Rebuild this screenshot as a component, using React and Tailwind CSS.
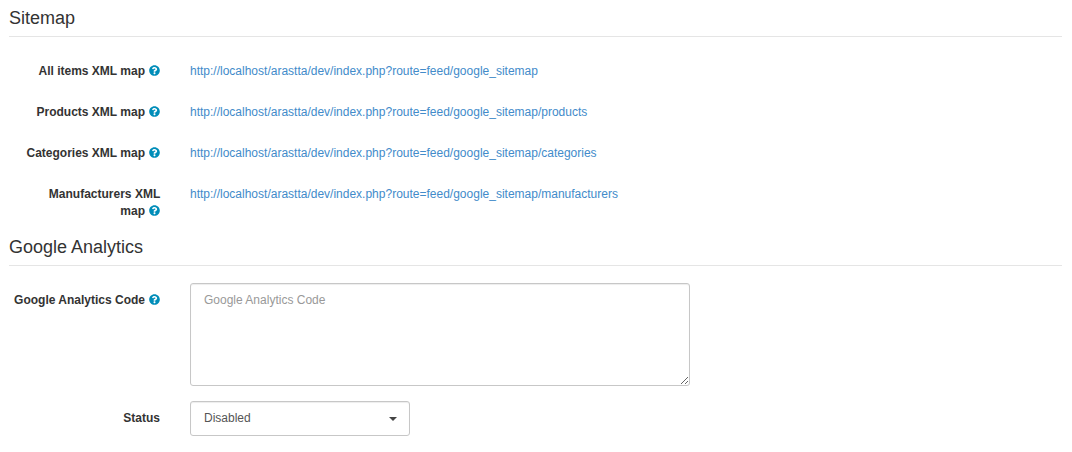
import React from "react";
import { FaQuestionCircle } from "react-icons/fa";

const base = "http://localhost/arastta/dev/index.php?route=feed/google_sitemap";
const maps = [
  { label: "All items XML", url: base },
  { label: "Products XML", url: base + "/products" },
  { label: "Categories XML", url: base + "/categories" },
  { label: "Manufacturers XML", url: base + "/manufacturers" },
];

function Help() {
  return <FaQuestionCircle aria-hidden="true" className="ml-1 inline-block size-[11px] align-[-1px] text-[#008db9]" />;
}

function Legend({ children }) {
  return <h2 className="border-b border-[#e5e5e5] pb-2 text-lg leading-5 text-[#333]">{children}</h2>;
}

export default function App() {
  return (
    <main className="bg-white pt-2 pr-[10px] pb-4 pl-[9px] font-['Liberation_Sans',Arial,sans-serif] text-xs leading-[17px] text-[#333]">
      <section>
        <Legend>Sitemap</Legend>
        <dl className="pt-[26px]">
          {maps.map((m) => (
            <div key={m.url} className="mb-6 flex gap-[30px] last:mb-0">
              <dt className="w-[151px] shrink-0 text-right font-bold">
                {m.label}{" "}
                <span className="whitespace-nowrap">
                  map
                  <Help />
                </span>
              </dt>
              <dd>
                <a href={m.url} className="text-[#428bca]">{m.url}</a>
              </dd>
            </div>
          ))}
        </dl>
      </section>
      <section className="pt-[17px]">
        <Legend>Google Analytics</Legend>
        <div className="flex gap-[30px] pt-[17px]">
          <label htmlFor="code" className="w-[151px] shrink-0 pt-[9px] text-right font-bold">
            Google Analytics Code
            <Help />
          </label>
          <textarea
            id="code"
            rows={5}
            placeholder="Google Analytics Code"
            className="block w-full max-w-[500px] rounded-[3px] border border-[#c7c7c7] px-[13px] py-2 shadow-[inset_0_1px_1px_rgba(0,0,0,0.075)] placeholder:text-[#999]"
          />
        </div>
        <div className="flex gap-[30px] pt-[15px]">
          <label htmlFor="status" className="w-[151px] shrink-0 pt-[9px] text-right font-bold">Status</label>
          <div className="relative w-[220px]">
            <select id="status" className="block w-full appearance-none rounded-[3px] border border-[#c7c7c7] bg-white px-[13px] py-2 text-[#555] shadow-[inset_0_1px_1px_rgba(0,0,0,0.075)]">
              <option>Disabled</option>
              <option>Enabled</option>
            </select>
            <svg aria-hidden="true" viewBox="0 0 8 4" className="pointer-events-none absolute top-4 right-[13px] h-1 w-2 fill-[#444]">
              <path d="M0 0h8L4 4z" />
            </svg>
          </div>
        </div>
      </section>
    </main>
  );
}
